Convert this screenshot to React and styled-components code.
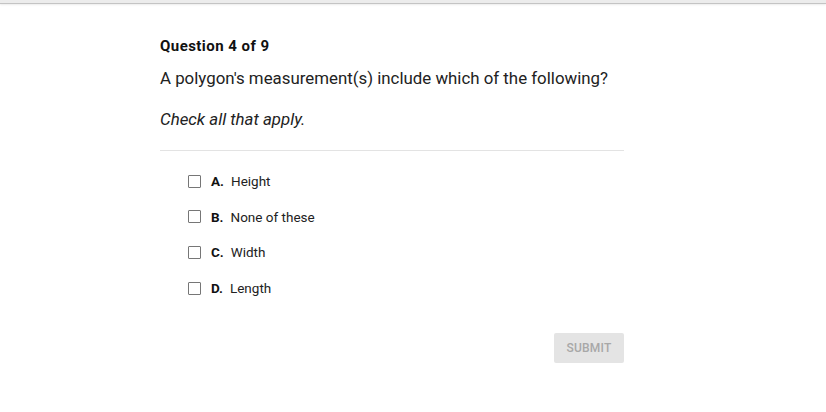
import React from "react";
import styled, { createGlobalStyle } from "styled-components";

const Global = createGlobalStyle`
  html, body { margin: 0; padding: 0; background: #fff; }
  body { font-family: Roboto, "Liberation Sans", sans-serif; color: #222; }
`;

const TopEdge = styled.div`
  height: 3px;
  background: #ececec;
  border-bottom: 1px solid #c4c4c4;
  box-shadow: 0 1px 2px rgba(0,0,0,0.08);
`;

const Main = styled.main`
  width: 464px;
  margin: 0 0 0 160px;
  padding-top: 33px;
`;

const Counter = styled.div`
  font-size: 15px;
  font-weight: 700;
  line-height: 18px;
  color: #111;
  letter-spacing: 0.45px;
`;

const Prompt = styled.p`
  margin: 12px 0 0;
  font-size: 16.85px;
  line-height: 22px;
  color: #222;
`;

const Hint = styled.p`
  margin: 19px 0 0;
  font-size: 16.85px;
  font-style: italic;
  line-height: 22px;
  color: #222;
`;

const Divider = styled.hr`
  margin: 20px 0 0;
  border: none;
  border-top: 1px solid #e3e3e3;
`;

const Options = styled.ul`
  list-style: none;
  margin: 0;
  padding: 21px 0 0 28px;
  display: flex;
  flex-direction: column;
  gap: 17.7px;
`;

const Option = styled.li`
  display: flex;
  align-items: center;
  height: 18px;
  font-size: 13.5px;
  color: #222;
`;

const Box = styled.span`
  width: 11px;
  height: 11px;
  border: 1px solid #767676;
  border-radius: 1px;
  margin-right: 10px;
`;

const Letter = styled.b`
  font-weight: 700;
  margin-right: 7px;
  color: #111;
`;

const Footer = styled.div`
  display: flex;
  justify-content: flex-end;
  margin-top: 36px;
`;

const Submit = styled.button`
  width: 70px;
  height: 30px;
  border: none;
  border-radius: 2px;
  background: #e4e4e4;
  color: #a8a8a8;
  font-family: Roboto, "Liberation Sans", sans-serif;
  font-size: 12px;
  font-weight: 500;
  text-transform: uppercase;
  letter-spacing: 0.2px;
  padding: 0;
`;

const options = [
  ["A.", "Height"],
  ["B.", "None of these"],
  ["C.", "Width"],
  ["D.", "Length"],
];

export default function App() {
  return (
    <>
      <Global />
      <TopEdge />
      <Main>
        <Counter>Question 4 of 9</Counter>
        <Prompt>A polygon's measurement(s) include which of the following?</Prompt>
        <Hint>Check all that apply.</Hint>
        <Divider />
        <Options>
          {options.map(([l, t]) => (
            <Option key={l}>
              <Box />
              <Letter>{l}</Letter>
              {t}
            </Option>
          ))}
        </Options>
        <Footer>
          <Submit disabled>Submit</Submit>
        </Footer>
      </Main>
    </>
  );
}
